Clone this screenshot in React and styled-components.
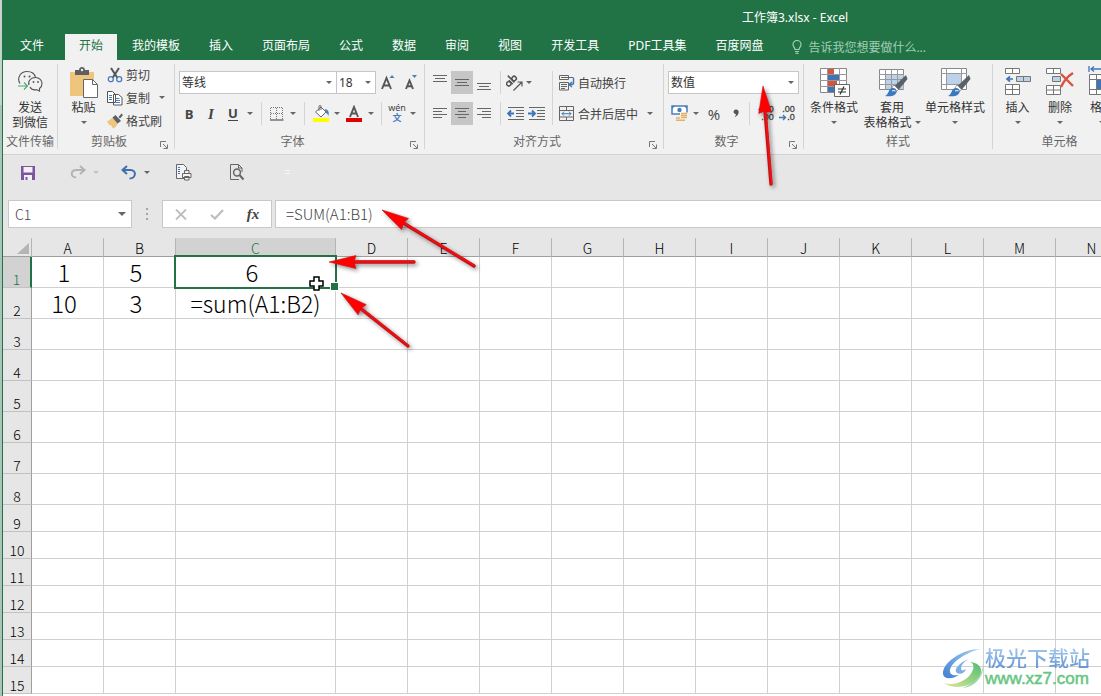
import React, { useState } from "react";
import styled, { createGlobalStyle } from "styled-components";

const GlobalStyle = createGlobalStyle`
  * {
    box-sizing: border-box;
  }
  body {
    margin: 0;
    overflow: hidden;
    font-family: "Noto Sans", "Noto Sans CJK SC", sans-serif;
    font-size: 12px;
    color: #444;
  }
  button, input, select {
    font: inherit;
    color: inherit;
    border: none;
    background: none;
    padding: 0;
    margin: 0;
    outline: none;
  }
  svg {
    display: block;
    flex-shrink: 0;
  }
`;

const Window = styled.div`
  position: relative;
  height: 100vh;
  display: flex;
  flex-direction: column;
  overflow: hidden;
  padding-left: 2px;
  background: linear-gradient(#cfcfcf 0 35px, #bfd6c9 35px 105px, #a9c4b8 105px);
`;

const Frame = styled.div`
  flex: 1;
  min-height: 0;
  display: flex;
  flex-direction: column;
  border-left: 1px solid #217346;
  background: #e6e6e6;
`;

const TitleBar = styled.header`
  background: #217346;
  color: #fff;
`;

const Title = styled.h1`
  margin: 0;
  height: 34px;
  padding-left: 739px;
  font-size: 12px;
  font-weight: 400;
  line-height: 36px;
  white-space: nowrap;
`;

const Tabs = styled.nav`
  display: flex;
  gap: 1px;
  height: 26px;
`;

const Tab = styled.button`
  padding: 0 14px 4px;
  white-space: nowrap;
  flex-shrink: 0;
  background: ${(p) => (p.$active ? "#f1f1f1" : "transparent")};
  color: ${(p) => (p.$active ? "#217346" : "#fff")};
`;

const FileTab = styled(Tab)`
  width: 58px;
  margin-right: 3px;
`;

const TellMe = styled.button`
  display: flex;
  align-items: center;
  gap: 6px;
  padding-left: 14px;
  color: #a3cdb4;
  white-space: nowrap;
`;

const Ribbon = styled.section`
  display: flex;
  height: 95px;
  padding: 4px 0 5px;
  background: #f1f1f1;
  border-bottom: 1px solid #d2d2d2;
  overflow: hidden;
  flex-shrink: 0;
`;

const GroupBox = styled.div`
  width: ${(p) => p.$width}px;
  flex-shrink: 0;
  display: flex;
  flex-direction: column;
  border-right: 1px solid #d4d4d4;
`;

const GroupBody = styled.div`
  flex: 1;
  display: flex;
  padding-left: ${(p) => p.$pad || 0}px;
`;

const GroupFoot = styled.div`
  display: grid;
  grid-template-columns: ${(p) => (p.$plain ? "1fr" : "1fr 14px")};
  align-items: end;
  height: 14px;
  color: #666;
  text-align: center;
  white-space: nowrap;
  line-height: 14px;
`;

const Rows = styled.div`
  display: flex;
  flex-direction: column;
  gap: 8px;
  padding-top: 7px;
`;

const Row = styled.div`
  display: flex;
  align-items: center;
  height: 23px;
`;

const Tool = styled.button`
  display: flex;
  align-items: center;
  justify-content: center;
  width: ${(p) => p.$width || 22}px;
  height: ${(p) => p.$height || 23}px;
  margin-left: ${(p) => p.$gap || 0}px;
  flex-shrink: 0;
  background: ${(p) => (p.$on ? "#c6c6c6" : "transparent")};
`;

const Glyph = styled.span`
  font-family: "Open Sans", "Noto Sans", sans-serif;
  font-size: ${(p) => p.$size || 13}px;
  font-weight: ${(p) => p.$weight || 700};
  line-height: 16px;
`;

const Italic = styled(Glyph)`
  font-family: "Liberation Serif", serif;
  font-style: italic;
  font-size: 15px;
`;

const Under = styled(Glyph)`
  line-height: 13px;
  border-bottom: 1px solid #444;
`;

const Sep = styled.span`
  width: 1px;
  height: 23px;
  margin: 0 5px;
  background: #d4d4d4;
  flex-shrink: 0;
`;

const TallSep = styled.span`
  width: 1px;
  height: 54px;
  margin: 7px 6px 0 4px;
  background: #d4d4d4;
`;

const SmallColumn = styled.div`
  display: flex;
  flex-direction: column;
  gap: 2px;
`;

const SmallRow = styled.div`
  display: flex;
  height: 21px;
`;

const Labelled = styled.button`
  display: flex;
  align-items: center;
  gap: 3px;
  height: ${(p) => p.$height || 21}px;
  white-space: nowrap;
`;

const Big = styled.button`
  display: flex;
  flex-direction: column;
  align-items: center;
  width: ${(p) => p.$width}px;
  flex-shrink: 0;
  padding-top: 2px;
  line-height: 15px;
  white-space: nowrap;
  color: #333;
`;

const BigIcon = styled.span`
  height: 34px;
`;

const SecondLine = styled.span`
  display: flex;
  align-items: center;
  justify-content: center;
  gap: 3px;
  height: 15px;
`;

const SelectWrap = styled.label`
  display: grid;
  align-items: center;
  width: ${(p) => p.$width}px;
  height: 23px;
  margin-right: ${(p) => (p.$joined ? "-1px" : "0")};
  border: 1px solid #c6c6c6;
  background: #fff;
  select {
    grid-area: 1 / 1;
    appearance: none;
    width: 100%;
    padding-left: 2px;
    color: #333;
  }
  svg {
    grid-area: 1 / 1;
    justify-self: end;
    margin-right: 4px;
    pointer-events: none;
  }
`;

const QuickBar = styled.div`
  display: flex;
  align-items: center;
  height: 35px;
  padding-left: 15px;
  flex-shrink: 0;
`;

const FormulaRow = styled.div`
  display: flex;
  height: 48px;
  padding: 10px 0 10px 5px;
  font-family: "Noto Sans CJK SC", sans-serif;
  font-size: 15px;
  flex-shrink: 0;
`;

const NameBox = styled.label`
  display: flex;
  align-items: center;
  justify-content: space-between;
  width: 124px;
  padding: 0 5px 0 6px;
  border: 1px solid #c8c8c8;
  background: #fff;
  input {
    width: 80px;
    height: 24px;
    font-size: 14px;
    font-weight: 300;
  }
`;

const Grip = styled.span`
  display: flex;
  align-items: center;
  justify-content: center;
  width: 30px;
`;

const FormulaButtons = styled.div`
  display: flex;
  align-items: center;
  width: 110px;
  margin-right: 3px;
  border: 1px solid #c8c8c8;
  background: #fff;
`;

const FormulaInput = styled.input`
  flex: 1;
  min-width: 0;
  padding: 0 0 2px 10px;
  font-weight: 300;
  border: 1px solid #c8c8c8;
  border-right: none;
  background: #fff;
`;

const Sheet = styled.main`
  flex: 1;
  min-height: 0;
  overflow: hidden;
  background: #fff;
`;

const Grid = styled.table`
  table-layout: fixed;
  width: 1125px;
  border-collapse: separate;
  border-spacing: 0;
  font-family: "Noto Sans CJK SC", sans-serif;
`;

const Col = styled.col`
  width: ${(p) => p.$width}px;
`;

const Corner = styled.td`
  padding: 0 2px 2px 0;
  border-right: 1px solid #b4b4b4;
  border-bottom: 1px solid #9f9f9f;
  background: #e6e6e6;
  vertical-align: bottom;
  svg {
    margin-left: auto;
  }
`;

const ColHead = styled.th`
  height: 19px;
  padding: 2px 0 0;
  font-size: 14px;
  font-weight: 300;
  line-height: 16px;
  color: ${(p) => (p.$on ? "#217346" : "#000")};
  background: ${(p) => (p.$on ? "#d2d2d2" : "#e6e6e6")};
  border-right: 1px solid #b4b4b4;
  border-bottom: 1px solid #9f9f9f;
`;

const RowHead = styled.th`
  height: ${(p) => p.$height}px;
  padding: 0;
  font-size: 14px;
  font-weight: 300;
  line-height: 16px;
  vertical-align: bottom;
  color: ${(p) => (p.$on ? "#217346" : "#000")};
  background: ${(p) => (p.$on ? "#d2d2d2" : "#e6e6e6")};
  border-right: ${(p) => (p.$on ? "2px solid #217346" : "1px solid #9f9f9f")};
  border-bottom: 1px solid #c2c2c2;
`;

const Cell = styled.td`
  position: relative;
  padding: ${(p) => (p.$numeric ? "0 7px 0 0" : "0")};
  font-size: ${(p) => (p.$numeric ? 24 : 23)}px;
  font-weight: 300;
  line-height: 30px;
  text-align: center;
  white-space: nowrap;
  color: #000;
  border-right: 1px solid #d0d0d0;
  border-bottom: 1px solid #d0d0d0;
`;

const Selection = styled.span`
  position: absolute;
  z-index: 1;
  inset: -2px;
  border: 2px solid #217346;
  &::after {
    content: "";
    position: absolute;
    right: -4px;
    bottom: -4px;
    width: 7px;
    height: 7px;
    background: #217346;
    border: 1px solid #fff;
  }
`;

const Cursor = styled.svg`
  position: absolute;
  z-index: 2;
  right: 11px;
  bottom: -4px;
`;

const Marks = styled.svg`
  position: absolute;
  z-index: 3;
  top: 0;
  left: 0;
  pointer-events: none;
  filter: drop-shadow(2px 2px 2px rgba(0, 0, 0, 0.45));
`;

const Watermark = styled.div`
  position: absolute;
  right: 11px;
  bottom: 6px;
  display: flex;
  align-items: center;
  gap: 1px;
`;

const SiteName = styled.div`
  font-family: "Noto Sans CJK SC", sans-serif;
  font-size: 21px;
  font-weight: 500;
  line-height: 22px;
  color: transparent;
  background: linear-gradient(#a5cdf2, #6796d4);
  background-clip: text;
`;

const SiteUrl = styled.div`
  font-family: "Liberation Sans", sans-serif;
  font-size: 17px;
  line-height: 22px;
  color: #67c682;
  -webkit-text-stroke: 0.5px #67c682;
`;

const Caret = ({ color = "#666", size = 6 }) => (
  <svg width={size} height={size > 6 ? 4 : 3} viewBox="0 0 6 3" preserveAspectRatio="none">
    <path d="M0 0h6L3 3z" fill={color} />
  </svg>
);

const Launcher = () => (
  <svg width="8" height="8" viewBox="0 0 8 8" fill="none" stroke="#777">
    <path d="M.5 6V.5H6M3 3l4 4M7.5 3.5v4h-4" />
  </svg>
);

const Bulb = () => (
  <svg width="10" height="14" viewBox="0 0 10 14" fill="none" stroke="#a3cdb4" strokeWidth="1.2">
    <path d="M3 9.500C3 7.500 1 7 1 4.500a4 4 0 0 1 8 0C9 7 7 7.500 7 9.500zM3 11.500h4M3.500 13.300h3" />
  </svg>
);

const WeChat = () => (
  <svg width="26" height="28" viewBox="0 -4 26 28" fill="none" stroke="#555" strokeWidth="1.100">
    <path d="M3 13.500C-.500 8 3.500 1.500 10 1.500c4.500 0 7.800 2.500 8.500 6" />
    <path d="M12 15c-1.500-4 2-7.500 6.500-7.500 4 0 6.500 3 6.500 6 0 2.500-1 4-2.500 5v2.500l-2.500-1.300c-3.500.6-6-.7-7-2.700" />
    <path d="M1 16h9M7 12.500l3.500 3.500L7 19.500" stroke="#4fa872" />
    <g fill="#555" stroke="none">
      <circle cx="7.500" cy="6.500" r="1" />
      <circle cx="12.500" cy="6.500" r="1" />
      <circle cx="16.500" cy="12" r=".9" />
      <circle cx="21" cy="12" r=".9" />
    </g>
  </svg>
);

const Paste = () => (
  <svg width="30" height="32" viewBox="0 -1 30 32">
    <path d="M1 5h24v24H1z" fill="#efc57d" />
    <path d="M6 3h4c0-4 6-4 6 0h4v5H6z" fill="#5f5f5f" />
    <circle cx="13" cy="3" r="1.200" fill="#f1f1f1" />
    <path d="M14.500 12.500h9l5 5v13h-14z" fill="#fff" stroke="#666" />
    <path d="M23.500 12.500v5h5" fill="none" stroke="#666" />
  </svg>
);

const Cut = () => (
  <svg width="16" height="16" viewBox="0 0 16 16" fill="none">
    <path d="M4 1l6.500 10M12 1L5.500 11" stroke="#555" strokeWidth="2" />
    <circle cx="3.800" cy="12.200" r="2.500" stroke="#4a7ebb" strokeWidth="1.300" />
    <circle cx="12.200" cy="12.200" r="2.500" stroke="#4a7ebb" strokeWidth="1.300" />
  </svg>
);

const Copy = () => (
  <svg width="16" height="16" viewBox="0 0 16 16" fill="#fff" stroke="#555">
    <path d="M.5 1.500h5l3 3v8h-8zM6.500 4.500h5l3.500 3v7.500h-8.500z" />
    <path d="M2 5.500h3M2 7.500h3M2 9.500h3M8.500 8.500h4M8.500 10.500h4.500M8.500 12.500h4.500" stroke="#4a7ebb" />
  </svg>
);

const Painter = () => (
  <svg width="16" height="16" viewBox="0 0 16 16">
    <path d="M0 8.500l6-4 5 6.500-4 4.500-2.500-1.500 0-2-2 .5z" fill="#efc57d" />
    <path d="M5.500 4.500l3-2.500 5.500 6-3.500 2.500zM11.500 4l3-3.500 1.500 1.500-3 3.500z" fill="#5b5f66" />
  </svg>
);

const GrowFont = ({ up }) => (
  <svg width="16" height="18" viewBox="0 0 16 18">
    <path
      d={up ? "M2 15L6.500 4l4.500 11M3.800 11.500h5.500" : "M4 15l3.500-8.500L11 15M5.500 12.300h4.200"}
      fill="none"
      stroke="#555"
      strokeWidth="1.900"
    />
    <path d={up ? "M9.500 4l2.500-3 2.500 3z" : "M10 1h5l-2.500 3z"} fill="#4a7ebb" />
  </svg>
);

const Borders = () => (
  <svg width="14" height="14" viewBox="0 0 14 14" fill="none" stroke="#777">
    <path d="M.5 1v12M6.500 1v12M12.500 1v12M1 .5h12M1 6.500h12" strokeDasharray="1 1" />
    <path d="M0 13h13.500" stroke="#555" strokeWidth="1.200" />
  </svg>
);

const Fill = () => (
  <svg width="17" height="17" viewBox="0 0 17 17" fill="none" stroke="#666">
    <path d="M0 13h16v4H0z" fill="#ffff00" stroke="none" />
    <path d="M2.500 7L8 2l5 5-5 5z" fill="#fff" />
    <path d="M6 6V1.500q0-1 1-1t1 1V5" />
    <path d="M12 4q5 1 3.500 7-1-3-3-3.500z" fill="#4a7ebb" stroke="none" />
  </svg>
);

const FontColor = () => (
  <svg width="17" height="17" viewBox="0 0 17 17" fill="none">
    <path d="M0 13h16v4H0z" fill="#e00000" />
    <path d="M4 12L8 2l4 10M5.500 8.500h5" stroke="#555" strokeWidth="1.900" />
  </svg>
);

const PinyinBox = styled.span`
  display: flex;
  flex-direction: column;
  align-items: center;
  font-size: 9px;
  line-height: 9px;
  b {
    color: #4a7ebb;
    font-size: 9px;
    line-height: 12px;
  }
`;

const lineSets = {
  top: "M1 1.500h14M3 4.500h10M1 7.500h14",
  middle: "M1 5.500h14M3 8.500h10M1 11.500h14",
  bottom: "M1 9.500h14M3 12.500h10M1 15.500h14",
  left: "M1 3.500h14M1 6.500h9M1 9.500h14M1 12.500h9",
  center: "M1 3.500h14M4 6.500h8M1 9.500h14M4 12.500h8",
  right: "M1 3.500h14M6 6.500h9M1 9.500h14M6 12.500h9",
};

const Lines = ({ kind }) => (
  <svg width="16" height="17" viewBox="0 0 16 17" stroke="#666">
    <path d={lineSets[kind]} />
  </svg>
);

const Orient = () => (
  <svg width="18" height="18" viewBox="0 0 18 18" fill="none" stroke="#555" strokeWidth="1.500">
    <g transform="rotate(-45 6 8)">
      <circle cx="2.500" cy="7" r="2.200" />
      <path d="M5 4.500v5.500M7.500 .5v9.500" />
      <circle cx="10" cy="7" r="2.200" />
    </g>
    <path d="M7.500 16.500L15.500 8.500M11.500 8h4.500v4.500" strokeWidth="1.200" />
  </svg>
);

const Indent = ({ out }) => (
  <svg width="17" height="15" viewBox="0 0 17 15" fill="none">
    <path d="M1 1.500h16M9 4.500h8M9 7.500h8M9 10.500h8M1 13.500h16" stroke="#666" />
    <path
      d={out ? "M1 7.500h6M4 4.500L1 7.500l3 3" : "M0 7.500h6.500M4 4.500l3 3-3 3"}
      stroke="#3f75b5"
      strokeWidth="1.800"
    />
  </svg>
);

const Wrap = () => (
  <svg width="16" height="16" viewBox="0 0 16 16" fill="none" stroke="#666">
    <path d="M.5 .5h9v4h-9zM.5 7.500h9v7.500h-9zM2 2.500h12.500M2 9.500h6M2 11.500h6M2 13.500h4" />
    <path d="M14.500 3v5q0 1.500-2 1.500h-2M13 7l-3 2.500 3 2.500" stroke="#3f75b5" strokeWidth="1.400" />
  </svg>
);

const Merge = () => (
  <svg width="16" height="16" viewBox="0 0 16 16" fill="none" stroke="#666">
    <path d="M.5 .5h14v14H.5zM.5 4.500h14M.5 11h14M7.500 .5v4M7.500 11v3.500" />
    <path d="M3 7.700h9M5 5.700l-2 2 2 2M10 5.700l2 2-2 2" stroke="#3f75b5" />
  </svg>
);

const Money = () => (
  <svg width="18" height="17" viewBox="0 0 18 17">
    <path d="M1 1h15v8H1z" fill="#fff" stroke="#4a7ebb" strokeWidth="1.500" />
    <circle cx="8.500" cy="5" r="2.200" fill="#4a7ebb" />
    <path d="M1 1h3L1 4zM16 1v3l-3-3z" fill="#4a7ebb" />
    <path d="M9 7.500h8v9H4v-5h5z" fill="#f1f1f1" />
    <path d="M10 8.500h6M10 10.500h6M10 12.500h6M5 13h4M5 15.200h9" stroke="#e5b263" strokeWidth="1.500" />
  </svg>
);

const DecimalBox = styled.span`
  display: flex;
  flex-direction: column;
  align-items: flex-end;
  font-family: "Liberation Sans", sans-serif;
  font-size: 9px;
  line-height: 9px;
  -webkit-text-stroke: 0.3px #444;
  span {
    display: flex;
    align-items: center;
    height: 8px;
  }
`;

const SmallArrow = ({ left }) => (
  <svg width="8" height="7" viewBox="0 0 8 7" fill="none" stroke="#3f75b5" strokeWidth="1.300">
    <path d={left ? "M1 3.500h6M3.500 1L1 3.500 3.500 6" : "M0 3.500h6M4 1l2.500 2.500L4 6"} />
  </svg>
);

const CondFormat = () => (
  <svg width="32" height="32" viewBox="0 0 32 32">
    <path d="M2.500 2.500h26v24h-26z" fill="#fff" stroke="#888" />
    <path d="M10 3h6v5h-6z" fill="#d2573f" />
    <path d="M10 9h11v5H10zM10 21h7v5h-7z" fill="#3f75b5" />
    <path d="M10 15h9v5h-9z" fill="#d2573f" />
    <path d="M9.500 2v25M21.500 2v25M2 8.500h27M2 14.500h27M2 20.500h27" stroke="#999" fill="none" />
    <path d="M16.500 18.500h15v12h-15z" fill="#fff" stroke="#666" />
    <path d="M20 23h8M20 26h8M26 20.500l-4 8" stroke="#333" strokeWidth="1.200" />
  </svg>
);

const Brush = () => (
  <g>
    <path d="M30 9L31.500 13l-9 11-4-4z" fill="#5c6067" />
    <path d="M18 19l4.500 4.500-2 2-4.500-4z" fill="#fff" stroke="#777" strokeWidth=".7" />
    <path d="M9 30c4-1 3-8 8-8 4 0 5 4 2 6.500-3 2.300-7 2-10 1.500z" fill="#3c78bd" />
    <path d="M16 25q2-1 3.500 0" stroke="#fff" fill="none" />
  </g>
);

const TableFormat = () => (
  <svg width="32" height="32" viewBox="0 0 32 32">
    <path d="M3.500 3.500h24v20h-24z" fill="#fff" stroke="#888" />
    <path d="M9.500 9h18v14h-18z" fill="#bcd2ea" />
    <path d="M9.500 3v21M15.500 3v21M21.500 3v21M3 8.500h25M3 13.500h25M3 18.500h25" stroke="#999" />
    <Brush />
  </svg>
);

const CellStyle = () => (
  <svg width="32" height="32" viewBox="0 0 32 32">
    <path d="M2.500 2.500h25v21h-25z" fill="#fff" stroke="#888" />
    <path d="M8 8h14v10H8z" fill="#bcd2ea" />
    <path d="M7.500 2v22M22.500 2v22M2 7.500h26M2 18.500h26" stroke="#999" />
    <Brush />
  </svg>
);

const InsertCells = () => (
  <svg width="28" height="30" viewBox="0 0 28 30" fill="#fff" stroke="#777">
    <path d="M1.500 2.500h14v5h-14zM8.500 2.500v5M1.500 18.500h14v10h-14zM8.500 18.500v10M1.500 23.500h14" />
    <path d="M12.500 10.500h14v5h-14zM19.500 10.500v5" fill="#bcd2ea" />
    <path d="M3 13h6M6 10.500L3 13l3 2.500" fill="none" stroke="#3f75b5" strokeWidth="1.700" />
  </svg>
);

const DeleteCells = () => (
  <svg width="30" height="30" viewBox="0 0 30 30" fill="#fff" stroke="#777">
    <path d="M1.500 2.500h14v5h-14zM8.500 2.500v5M1.500 19.500h14v9h-14zM8.500 19.500v9M1.500 24h14" />
    <path d="M7.500 10.500h8v5h-8z" fill="#bcd2ea" />
    <path d="M16 8q6 6 12 12M28 7q-8 5-12 14" fill="none" stroke="#d9533f" strokeWidth="2.400" />
  </svg>
);

const FormatCells = () => (
  <svg width="28" height="32" viewBox="0 0 28 32" fill="#fff" stroke="#777">
    <path d="M1 0v6M26 0v6M3 3h21M6 .5L3 3l3 2.500" fill="none" stroke="#3f75b5" strokeWidth="1.300" />
    <path d="M1.500 8.500h25v20h-25zM8.500 8.500v20M1.500 13.500h25M1.500 23.500h25" />
    <path d="M9 14h12v9H9z" fill="#3f75b5" stroke="none" />
  </svg>
);

const Save = () => (
  <svg width="14" height="14" viewBox="0 0 14 14">
    <path d="M0 0h14v14H0z" fill="#7c55a0" />
    <path d="M2.500 1h9v5.500h-9zM3 9h8v5H3z" fill="#f4f0f8" />
    <path d="M4.500 11h2v3h-2z" fill="#7c55a0" />
  </svg>
);

const Turn = ({ redo }) => (
  <svg width="16" height="15" viewBox="0 0 16 15" fill="none" stroke={redo ? "#b4b4b4" : "#3f6fae"} strokeWidth="2">
    <path
      d={
        redo
          ? "M14 5H6.500C0 5 .5 12.500 6 12.500M10 1l4.500 4L10 9"
          : "M2 5h7.500c6.500 0 5.500 8.500-1 8.500M6 1L1.500 5 6 9"
      }
    />
  </svg>
);

const PrintDoc = () => (
  <svg width="17" height="17" viewBox="0 0 17 17" fill="#f4f4f4" stroke="#666">
    <path d="M9 14.500H1.500v-14h7l3 3V6" />
    <path d="M3 3.500h2M3 5.500h2M3 7.500h2M3 9.500h2" stroke="#3f75b5" />
    <path d="M7.500 9.500h8.500v4H7.500zM9.500 6.500h4.500v3H9.500zM9.500 12.500h4.500v3.500H9.500z" />
  </svg>
);

const Preview = () => (
  <svg width="16" height="17" viewBox="0 0 16 17" fill="none" stroke="#666">
    <path d="M10 15.500H1.500V.5h8l3.500 3.500v4M9.500 .5V4H13" />
    <circle cx="8" cy="8.500" r="3.400" strokeWidth="1.500" />
    <path d="M10.500 11l4 4.500" strokeWidth="2" />
  </svg>
);

const Swirl = () => (
  <svg width="42" height="42" viewBox="0 0 42 42">
    <defs>
      <linearGradient id="sky" x1="0" y1="1" x2="1" y2="0">
        <stop offset="0" stopColor="#3e7fd0" />
        <stop offset="1" stopColor="#a8d2f3" />
      </linearGradient>
      <linearGradient id="leaf" x1="0" y1="1" x2="1" y2="0">
        <stop offset="0" stopColor="#e3e59a" />
        <stop offset="1" stopColor="#4dbd70" />
      </linearGradient>
    </defs>
    <path d="M38 2C20 2 0 16 1 27c1 6 10 5 16 1-5 1-9 0-9-4C8 16 23 6 38 2z" fill="url(#sky)" />
    <path d="M26 12c-9 4-15 11-11 14 3 2 8 0 9-4-3 2-5 2-5-1 0-3 3-6 7-9z" fill="#7aaee3" />
    <path d="M27 15c9 1 3 14-5 18-7 4-13 5-20 3 8 6 23 5 31-2 8-6 10-18-6-19z" fill="url(#leaf)" />
    <path d="M41 16c1 10-8 20-20 25 12-1 22-12 20-25z" fill="#9ad6a2" />
  </svg>
);

const Arrow = ({ from, to }) => {
  const dx = from[0] - to[0];
  const dy = from[1] - to[1];
  const angle = (Math.atan2(dy, dx) * 180) / Math.PI;
  const length = Math.hypot(dx, dy);
  return (
    <g transform={`translate(${to[0]} ${to[1]}) rotate(${angle})`}>
      <path d={`M24 0H${length}`} stroke="#c8101a" strokeWidth="3.400" strokeLinecap="round" />
      <path d={`M24 -.5H${length}`} stroke="#f01010" strokeWidth="1.800" strokeLinecap="round" />
      <path d="M0 0L27 -6.500L25 0L27 6.500z" fill="#ff0000" stroke="#d01010" strokeWidth=".6" />
    </g>
  );
};

const Group = ({ width, label, pad, launcher, children }) => (
  <GroupBox $width={width}>
    <GroupBody $pad={pad}>{children}</GroupBody>
    <GroupFoot $plain={!launcher}>
      <span>{label}</span>
      {launcher && <Launcher />}
    </GroupFoot>
  </GroupBox>
);

const Picker = ({ label, width, options, joined }) => (
  <SelectWrap $width={width} $joined={joined}>
    <select aria-label={label}>
      {options.map((o) => (
        <option key={o}>{o}</option>
      ))}
    </select>
    <Caret />
  </SelectWrap>
);

const Drop = ({ width = 12, height = 23, color, label = "更多" }) => (
  <Tool $width={width} $height={height} aria-label={label}>
    <Caret color={color} />
  </Tool>
);

const tabs = [
  "开始",
  "我的模板",
  "插入",
  "页面布局",
  "公式",
  "数据",
  "审阅",
  "视图",
  "开发工具",
  "PDF工具集",
  "百度网盘",
];

const columns = "ABCDEFGHIJKLMN".split("");
const cells = {
  A1: "1",
  B1: "5",
  C1: "6",
  A2: "10",
  B2: "3",
  C2: "=sum(A1:B2)",
};
const rows = Array.from({ length: 15 }, (_, i) => ({
  id: i + 1,
  height: i < 8 ? 31 : 27,
}));

const Clipboard = () => (
  <Group width={117} label="剪贴板" pad={8} launcher>
    <Big $width={35}>
      <BigIcon>
        <Paste />
      </BigIcon>
      粘贴
      <SecondLine>
        <Caret />
      </SecondLine>
    </Big>
    <GroupBody $pad={6}>
      <SmallColumn>
        <Labelled>
          <Cut />
          剪切
        </Labelled>
        <SmallRow>
          <Labelled>
            <Copy />
            复制
          </Labelled>
          <Drop width={24} height={21} />
        </SmallRow>
        <Labelled>
          <Painter />
          格式刷
        </Labelled>
      </SmallColumn>
    </GroupBody>
  </Group>
);

const FontGroup = () => (
  <Group width={250} label="字体" pad={4} launcher>
    <Rows>
      <Row>
        <Picker label="字体" width={158} options={["等线", "宋体"]} joined />
        <Picker label="字号" width={40} options={["18", "20"]} />
        <Tool $width={24} aria-label="增大字号">
          <GrowFont up />
        </Tool>
        <Tool $width={20} aria-label="减小字号">
          <GrowFont />
        </Tool>
      </Row>
      <Row>
        <Tool $width={20}>
          <Glyph>B</Glyph>
        </Tool>
        <Tool $width={24}>
          <Italic>I</Italic>
        </Tool>
        <Tool $width={20}>
          <Under>U</Under>
        </Tool>
        <Drop width={13} />
        <Sep />
        <Tool $width={20} aria-label="边框">
          <Borders />
        </Tool>
        <Drop />
        <Sep />
        <Tool aria-label="填充颜色">
          <Fill />
        </Tool>
        <Drop width={10} />
        <Tool $width={24} aria-label="字体颜色">
          <FontColor />
        </Tool>
        <Drop width={10} />
        <Sep />
        <Tool $width={20}>
          <PinyinBox>
            wén
            <b>文</b>
          </PinyinBox>
        </Tool>
        <Drop />
      </Row>
    </Rows>
  </Group>
);

const AlignGroup = () => (
  <Group width={239} label="对齐方式" pad={4} launcher>
    <Rows>
      <Row>
        {["top", "middle", "bottom"].map((k) => (
          <Tool key={k} $on={k === "middle"} aria-label={k}>
            <Lines kind={k} />
          </Tool>
        ))}
        <Sep />
        <Tool $width={18} aria-label="方向">
          <Orient />
        </Tool>
        <Drop width={10} />
      </Row>
      <Row>
        {["left", "center", "right"].map((k) => (
          <Tool key={k} $on={k === "center"} aria-label={k}>
            <Lines kind={k} />
          </Tool>
        ))}
        <Sep />
        <Tool $width={18} aria-label="减少缩进量">
          <Indent out />
        </Tool>
        <Tool $width={24} aria-label="增加缩进量">
          <Indent />
        </Tool>
      </Row>
    </Rows>
    <TallSep />
    <Rows>
      <Labelled $height={23}>
        <Wrap />
        自动换行
      </Labelled>
      <Row>
        <Labelled $height={23}>
          <Merge />
          合并后居中
        </Labelled>
        <Drop width={24} />
      </Row>
    </Rows>
  </Group>
);

const NumberGroup = () => (
  <Group width={140} label="数字" pad={4} launcher>
    <Rows>
      <Row>
        <Picker label="数字格式" width={131} options={["数值", "常规"]} />
      </Row>
      <Row>
        <Tool $width={24} aria-label="会计数字格式">
          <Money />
        </Tool>
        <Drop width={8} />
        <Tool $width={28}>
          <Glyph $size={15} $weight={400}>
            %
          </Glyph>
        </Tool>
        <Tool $width={16} aria-label="千位分隔样式">
          <svg width="6" height="9" viewBox="0 0 6 9">
            <path d="M3 .5c4 0 3.500 5.500-1.500 8 1-1.500 1.500-2.500 1.300-3.500C-.2 5-.2 .5 3 .5z" fill="#555" />
          </svg>
        </Tool>
        <Sep />
        <Tool $width={22}>
          <DecimalBox>
            <span>
              <SmallArrow left />
              .0
            </span>
            <span>.00</span>
          </DecimalBox>
        </Tool>
        <Tool $width={20}>
          <DecimalBox>
            <span>.00</span>
            <span>
              <SmallArrow />
              .0
            </span>
          </DecimalBox>
        </Tool>
      </Row>
    </Rows>
  </Group>
);

export default function App() {
  const [formula, setFormula] = useState("=SUM(A1:B1)");
  const [name, setName] = useState("C1");

  return (
    <Window>
      <GlobalStyle />
      <Frame>
        <TitleBar>
          <Title>工作簿3.xlsx - Excel</Title>
          <Tabs>
            <FileTab>文件</FileTab>
            {tabs.map((t) => (
              <Tab key={t} $active={t === "开始"}>
                {t}
              </Tab>
            ))}
            <TellMe>
              <Bulb />
              告诉我您想要做什么...
            </TellMe>
          </Tabs>
        </TitleBar>

        <Ribbon>
          <Group width={55} label="文件传输">
            <Big $width={54}>
              <BigIcon>
                <WeChat />
              </BigIcon>
              发送
              <SecondLine>到微信</SecondLine>
            </Big>
          </Group>
          <Clipboard />
          <FontGroup />
          <AlignGroup />
          <NumberGroup />
          <Group width={189} label="样式">
            <Big $width={60}>
              <BigIcon>
                <CondFormat />
              </BigIcon>
              条件格式
              <SecondLine>
                <Caret />
              </SecondLine>
            </Big>
            <Big $width={56}>
              <BigIcon>
                <TableFormat />
              </BigIcon>
              套用
              <SecondLine>
                表格格式
                <Caret />
              </SecondLine>
            </Big>
            <Big $width={70}>
              <BigIcon>
                <CellStyle />
              </BigIcon>
              单元格样式
              <SecondLine>
                <Caret />
              </SecondLine>
            </Big>
          </Group>
          <Group width={134} label="单元格" pad={3}>
            <Big $width={43}>
              <BigIcon>
                <InsertCells />
              </BigIcon>
              插入
              <SecondLine>
                <Caret />
              </SecondLine>
            </Big>
            <Big $width={42}>
              <BigIcon>
                <DeleteCells />
              </BigIcon>
              删除
              <SecondLine>
                <Caret />
              </SecondLine>
            </Big>
            <Big $width={42}>
              <BigIcon>
                <FormatCells />
              </BigIcon>
              格式
              <SecondLine>
                <Caret />
              </SecondLine>
            </Big>
          </Group>
        </Ribbon>

        <QuickBar>
          <Tool $width={20} aria-label="保存">
            <Save />
          </Tool>
          <Tool $width={20} $gap={30} aria-label="恢复">
            <Turn redo />
          </Tool>
          <Drop width={16} color="#c0c0c0" />
          <Tool $width={20} $gap={15} aria-label="撤消">
            <Turn />
          </Tool>
          <Drop width={16} />
          <Tool $width={20} $gap={18} aria-label="打印">
            <PrintDoc />
          </Tool>
          <Tool $width={20} $gap={34} aria-label="打印预览">
            <Preview />
          </Tool>
          <Tool $width={20} $gap={30} aria-label="自定义快速访问工具栏">
            <svg width="5" height="5" viewBox="0 0 5 5" stroke="#f6f6f6">
              <path d="M0 .5h5M0 3.500h5" />
            </svg>
          </Tool>
        </QuickBar>

        <FormulaRow>
          <NameBox>
            <input aria-label="名称框" value={name} onChange={(e) => setName(e.target.value)} />
            <Caret size={8} />
          </NameBox>
          <Grip>
            <svg width="2" height="12" viewBox="0 0 2 12" fill="#a5a5a5">
              <path d="M0 0h2v2H0zM0 5h2v2H0zM0 10h2v2H0z" />
            </svg>
          </Grip>
          <FormulaButtons>
            <Tool $width={36} aria-label="取消">
              <svg width="12" height="11" viewBox="0 0 12 11" stroke="#bdbdbd" strokeWidth="1.800">
                <path d="M1 .5l10 10M11 .5l-10 10" />
              </svg>
            </Tool>
            <Tool $width={36} aria-label="输入">
              <svg width="14" height="11" viewBox="0 0 14 11" fill="none" stroke="#bdbdbd" strokeWidth="2.200">
                <path d="M1 6l4 3.500L13 1" />
              </svg>
            </Tool>
            <Tool $width={36}>
              <Italic>fx</Italic>
            </Tool>
          </FormulaButtons>
          <FormulaInput aria-label="编辑栏" value={formula} onChange={(e) => setFormula(e.target.value)} />
        </FormulaRow>

        <Sheet>
          <Grid>
            <colgroup>
              <Col $width={29} />
              {columns.map((c) => (
                <Col key={c} $width={c === "C" ? 160 : 72} />
              ))}
            </colgroup>
            <thead>
              <tr>
                <Corner>
                  <svg width="12" height="11" viewBox="0 0 12 11">
                    <path d="M12 0v11H0z" fill="#b4b4b4" />
                  </svg>
                </Corner>
                {columns.map((c) => (
                  <ColHead key={c} $on={c === "C"}>
                    {c}
                  </ColHead>
                ))}
              </tr>
            </thead>
            <tbody>
              {rows.map((r) => (
                <tr key={r.id}>
                  <RowHead $height={r.height} $on={r.id === 1}>
                    {r.id}
                  </RowHead>
                  {columns.map((c) => {
                    const value = cells[c + r.id];
                    return (
                      <Cell key={c} $numeric={value && value[0] !== "="}>
                        {value}
                        {c + r.id === name && (
                          <>
                            <Selection />
                            <Cursor width="15" height="15" viewBox="0 0 15 15">
                              <path
                                d="M5 1h5v4h4v5h-4v4H5v-4H1V5h4z"
                                fill="#fff"
                                stroke="#000"
                                strokeWidth="1.500"
                              />
                            </Cursor>
                          </>
                        )}
                      </Cell>
                    );
                  })}
                </tr>
              ))}
            </tbody>
          </Grid>
        </Sheet>
      </Frame>

      <Marks width="800" height="400" viewBox="0 0 800 400">
        <Arrow from={[771, 184]} to={[763, 86]} />
        <Arrow from={[474, 266]} to={[382, 210]} />
        <Arrow from={[414, 262]} to={[329, 262]} />
        <Arrow from={[408, 346]} to={[341, 293]} />
      </Marks>

      <Watermark>
        <Swirl />
        <div>
          <SiteName>极光下载站</SiteName>
          <SiteUrl>www.xz7.com</SiteUrl>
        </div>
      </Watermark>
    </Window>
  );
}
